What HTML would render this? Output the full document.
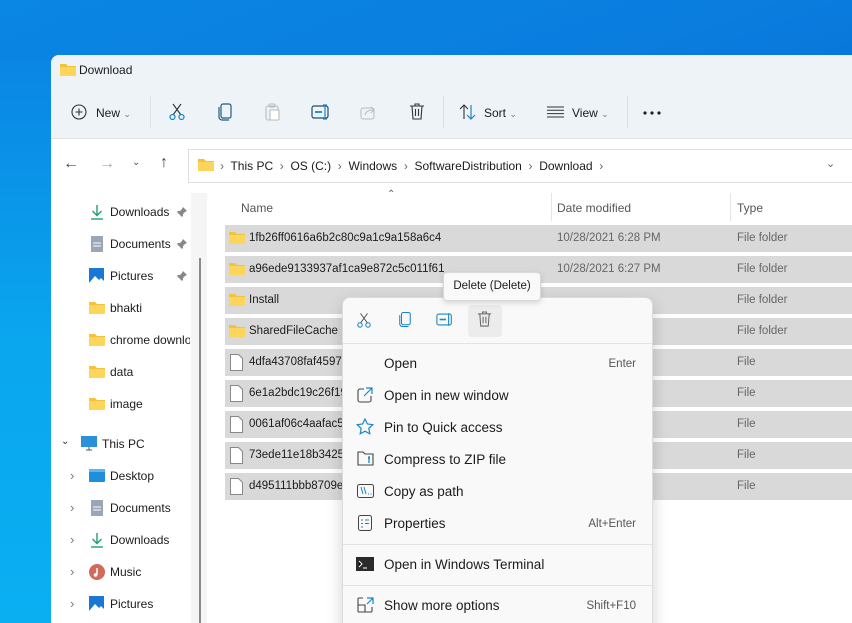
<!DOCTYPE html>
<html style="width:852px;height:623px;overflow:hidden"><head><meta charset="utf-8"><style>
*{margin:0;padding:0;box-sizing:border-box}
body{width:852px;height:623px;overflow:hidden;position:relative;font-family:"Liberation Sans",sans-serif;background:linear-gradient(160deg,#0a86e4 0%,#0a7ddf 30%,#0666d0 70%,#0560c8 100%);}
.bgl{position:absolute;left:0;top:60px;width:51px;height:563px;background:linear-gradient(180deg,#0a86e4,#0aa6ee 50%,#0aaff2)}
.a{position:absolute;white-space:nowrap}
.win{position:absolute;left:51px;top:55px;width:801px;height:568px;background:#fff;border-radius:8px 0 0 0;overflow:hidden}
.hdr{position:absolute;left:0;top:0;width:100%;height:84px;background:#eef3f8;border-bottom:1px solid #e0e3e6}
.t12{font-size:12px;color:#1b1b1b}
.row{position:absolute;left:225px;width:627px;height:27px;background:#d9d9d9;font-size:11.5px;color:#1b1b1b}
.row span{position:absolute;top:7px}
.menu{position:absolute;left:342px;top:297px;width:311px;height:340px;background:#f9f9f9;border:1px solid #dcdcdc;border-radius:8px;box-shadow:0 6px 16px rgba(0,0,0,.18)}
.mi{position:absolute;left:41px;font-size:13.5px;color:#1b1b1b}
.sc{position:absolute;right:16px;font-size:11.5px;color:#555}
.sep{position:absolute;left:0;width:100%;height:1px;background:#e3e3e3}
svg{position:absolute}
</style></head><body>
<div class="bgl"></div>
<div class="win">
 <div class="hdr"></div>
</div>
<svg style="left:60px;top:63px" width="16" height="13" viewBox="0 0 16 13"><path d="M0 1h6l2 2h8v10H0z" fill="#f0c33c"/><path d="M0 4h16v9H0z" fill="#fcd55a"/></svg>
<div class="a t12" style="left:79px;top:63px">Download</div>
<svg style="left:71px;top:104px" width="16" height="16" viewBox="0 0 16 16"><circle cx="8" cy="8" r="7" fill="none" stroke="#333" stroke-width="1.1"/><path d="M8 4.5v7M4.5 8h7" stroke="#333" stroke-width="1.1"/></svg>
<div class="a t12" style="left:96px;top:106px">New <span style="font-size:9px;color:#777">&#8964;</span></div>
<div class="a" style="left:150px;top:96px;width:1px;height:32px;background:#dde1e5"></div>
<svg style="left:168px;top:103px" width="18" height="18" viewBox="0 0 18 18"><path d="M5 1l8 11M13 1L5 12" stroke="#333" stroke-width="1.1"/><circle cx="4.5" cy="14" r="2.5" fill="none" stroke="#1a86c8" stroke-width="1.2"/><circle cx="13.5" cy="14" r="2.5" fill="none" stroke="#1a86c8" stroke-width="1.2"/></svg>
<svg style="left:217px;top:103px" width="16" height="18" viewBox="0 0 16 18"><rect x="4" y="1" width="10" height="14" rx="2" fill="none" stroke="#1e5c84" stroke-width="1.2"/><path d="M2 4v10a3 3 0 0 0 3 3h7" fill="none" stroke="#1e5c84" stroke-width="1.2"/></svg>
<svg style="left:265px;top:103px" width="16" height="18" viewBox="0 0 16 18"><rect x="1" y="3" width="12" height="14" rx="2" fill="none" stroke="#bbb" stroke-width="1.1"/><rect x="5" y="7" width="9" height="10" rx="1" fill="#fff" stroke="#bbb" stroke-width="1.1"/><rect x="4" y="1" width="6" height="3" rx="1" fill="none" stroke="#bbb"/></svg>
<svg style="left:311px;top:104px" width="20" height="16" viewBox="0 0 20 16"><rect x="1" y="2" width="16" height="12" rx="2" fill="none" stroke="#1e4e70" stroke-width="1.2"/><path d="M4 8h7" stroke="#1a86c8" stroke-width="1.8"/><path d="M14 1v14M12 1h4M12 15h4" stroke="#1a86c8" stroke-width="1.2"/></svg>
<svg style="left:360px;top:104px" width="17" height="16" viewBox="0 0 17 16"><rect x="1" y="4" width="13" height="11" rx="2" fill="none" stroke="#bbb"/><path d="M5 11c1-4 4-5 8-5M11 3l3 3-3 3" fill="none" stroke="#bbb"/></svg>
<svg style="left:409px;top:103px" width="16" height="18" viewBox="0 0 16 18"><path d="M1 3h14M6 3V1h4v2M3 3l1 13h8l1-13M6.5 6v7M9.5 6v7" fill="none" stroke="#333" stroke-width="1.1"/></svg>
<div class="a" style="left:443px;top:96px;width:1px;height:32px;background:#dde1e5"></div>
<svg style="left:459px;top:104px" width="18" height="16" viewBox="0 0 18 16"><path d="M5 15V1M1 5l4-4 4 4" fill="none" stroke="#333" stroke-width="1.1"/><path d="M12 1v14M8 11l4 4 4-4" fill="none" stroke="#1a86c8" stroke-width="1.2"/></svg>
<div class="a t12" style="left:484px;top:106px">Sort <span style="font-size:9px;color:#777">&#8964;</span></div>
<svg style="left:547px;top:106px" width="17" height="12" viewBox="0 0 17 12"><path d="M0 1h17M0 4.3h17M0 7.6h17M0 11h17" stroke="#333" stroke-width="1"/></svg>
<div class="a t12" style="left:572px;top:106px">View <span style="font-size:9px;color:#777">&#8964;</span></div>
<div class="a" style="left:627px;top:96px;width:1px;height:32px;background:#dde1e5"></div>
<svg style="left:643px;top:111px" width="18" height="4"><circle cx="2" cy="2" r="1.6" fill="#222"/><circle cx="9" cy="2" r="1.6" fill="#222"/><circle cx="16" cy="2" r="1.6" fill="#222"/></svg>
<div class="a" style="left:63px;top:155px;font-size:16px;color:#444">&#8592;</div>
<div class="a" style="left:99px;top:155px;font-size:16px;color:#aaa">&#8594;</div>
<div class="a" style="left:132px;top:157px;font-size:10px;color:#555">&#8964;</div>
<div class="a" style="left:160px;top:154px;font-size:16px;color:#444">&#8593;</div>
<div class="a" style="left:188px;top:149px;width:680px;height:34px;border:1px solid #dedede;background:#fff"></div>
<svg style="left:198px;top:158px" width="16" height="13" viewBox="0 0 16 13"><path d="M0 1h6l2 2h8v10H0z" fill="#f0c33c"/><path d="M0 4h16v9H0z" fill="#fcd55a"/></svg>
<div class="a t12" style="left:220px;top:159px"><span style="color:#666">›</span>&nbsp; This PC &nbsp;<span style="color:#666">›</span>&nbsp; OS (C:) &nbsp;<span style="color:#666">›</span>&nbsp; Windows &nbsp;<span style="color:#666">›</span>&nbsp; SoftwareDistribution &nbsp;<span style="color:#666">›</span>&nbsp; Download &nbsp;<span style="color:#666">›</span></div>
<div class="a" style="left:826px;top:157px;font-size:11px;color:#666">&#8964;</div>
<div class="a" style="left:191px;top:193px;width:16px;height:430px;background:#f5f5f5"></div>
<div class="a" style="left:199px;top:258px;width:2px;height:365px;background:#8a8a8a"></div>
<div class="a t12" style="left:110px;top:205px">Downloads</div>
<div class="a t12" style="left:110px;top:237px">Documents</div>
<div class="a t12" style="left:110px;top:269px">Pictures</div>
<div class="a t12" style="left:110px;top:301px">bhakti</div>
<div class="a t12" style="left:110px;top:333px;width:80px;overflow:hidden">chrome downloads</div>
<div class="a t12" style="left:110px;top:365px">data</div>
<div class="a t12" style="left:110px;top:397px">image</div>
<svg style="left:176px;top:206px" width="12" height="12" viewBox="0 0 12 12"><path d="M7 1l4 4-2 1-2 2 0 2-1 1-5-5 1-1 2 0 2-2z M3 8l-2 3" fill="#888"/></svg>
<svg style="left:176px;top:238px" width="12" height="12" viewBox="0 0 12 12"><path d="M7 1l4 4-2 1-2 2 0 2-1 1-5-5 1-1 2 0 2-2z M3 8l-2 3" fill="#888"/></svg>
<svg style="left:176px;top:270px" width="12" height="12" viewBox="0 0 12 12"><path d="M7 1l4 4-2 1-2 2 0 2-1 1-5-5 1-1 2 0 2-2z M3 8l-2 3" fill="#888"/></svg>
<svg style="left:89px;top:204px" width="16" height="16" viewBox="0 0 16 16"><path d="M8 1v10M3.5 7l4.5 4.5L12.5 7" fill="none" stroke="#20a070" stroke-width="1.4"/><path d="M2 15h12" stroke="#20a070" stroke-width="1.4"/></svg>
<svg style="left:91px;top:236px" width="12" height="16"><rect width="12" height="16" fill="#9aa6b6"/><path d="M2 7h8M2 10h8" stroke="#fff"/></svg>
<svg style="left:89px;top:268px" width="15" height="15"><rect width="15" height="15" fill="#1a78d4"/><path d="M0 15l6-7 4 4 2-2 3 3v2z" fill="#fff"/></svg>
<svg style="left:89px;top:302px" width="16" height="12" viewBox="0 0 16 12"><path d="M0 0h6l2 2h8v10H0z" fill="#f0c33c"/><path d="M0 3h16v9H0z" fill="#fcd55a"/></svg>
<svg style="left:89px;top:334px" width="16" height="12" viewBox="0 0 16 12"><path d="M0 0h6l2 2h8v10H0z" fill="#f0c33c"/><path d="M0 3h16v9H0z" fill="#fcd55a"/></svg>
<svg style="left:89px;top:366px" width="16" height="12" viewBox="0 0 16 12"><path d="M0 0h6l2 2h8v10H0z" fill="#f0c33c"/><path d="M0 3h16v9H0z" fill="#fcd55a"/></svg>
<svg style="left:89px;top:398px" width="16" height="12" viewBox="0 0 16 12"><path d="M0 0h6l2 2h8v10H0z" fill="#f0c33c"/><path d="M0 3h16v9H0z" fill="#fcd55a"/></svg>
<div class="a" style="left:61px;top:436px;font-size:10px;color:#333">&#8964;</div>
<svg style="left:81px;top:436px" width="16" height="15"><rect width="16" height="11" fill="#2a90d8"/><path d="M5 14h6M8 11v3" stroke="#555"/></svg>
<div class="a t12" style="left:102px;top:437px">This PC</div>
<div class="a" style="left:70px;top:468px;font-size:13px;color:#777">›</div>
<div class="a" style="left:70px;top:500px;font-size:13px;color:#777">›</div>
<div class="a" style="left:70px;top:532px;font-size:13px;color:#777">›</div>
<div class="a" style="left:70px;top:564px;font-size:13px;color:#777">›</div>
<div class="a" style="left:70px;top:596px;font-size:13px;color:#777">›</div>
<svg style="left:89px;top:469px" width="16" height="13"><rect width="16" height="13" rx="1" fill="#1e8fd8"/><rect width="16" height="3" fill="#5bb8ee"/></svg>
<svg style="left:91px;top:500px" width="12" height="16"><rect width="12" height="16" fill="#9aa6b6"/><path d="M2 7h8M2 10h8" stroke="#fff"/></svg>
<svg style="left:89px;top:532px" width="16" height="16" viewBox="0 0 16 16"><path d="M8 1v10M3.5 7l4.5 4.5L12.5 7" fill="none" stroke="#20a070" stroke-width="1.4"/><path d="M2 15h12" stroke="#20a070" stroke-width="1.4"/></svg>
<svg style="left:89px;top:564px" width="16" height="16"><circle cx="8" cy="8" r="8" fill="#d06a5a"/><path d="M8 4v7" stroke="#fff" stroke-width="1.5"/><circle cx="6.5" cy="11" r="1.8" fill="#fff"/></svg>
<svg style="left:89px;top:596px" width="15" height="15"><rect width="15" height="15" fill="#1a78d4"/><path d="M0 15l6-7 4 4 2-2 3 3v2z" fill="#fff"/></svg>
<div class="a t12" style="left:110px;top:469px">Desktop</div>
<div class="a t12" style="left:110px;top:501px">Documents</div>
<div class="a t12" style="left:110px;top:533px">Downloads</div>
<div class="a t12" style="left:110px;top:565px">Music</div>
<div class="a t12" style="left:110px;top:597px">Pictures</div>
<div class="a" style="left:387px;top:189px;font-size:10px;color:#666">&#8963;</div>
<div class="a" style="left:241px;top:201px;font-size:12px;color:#555">Name</div>
<div class="a" style="left:551px;top:193px;width:1px;height:28px;background:#e5e5e5"></div>
<div class="a" style="left:557px;top:201px;font-size:12px;color:#555">Date modified</div>
<div class="a" style="left:730px;top:193px;width:1px;height:28px;background:#e5e5e5"></div>
<div class="a" style="left:737px;top:201px;font-size:12px;color:#555">Type</div>
<div class="row" style="top:225px"><span style="left:24px">1fb26ff0616a6b2c80c9a1c9a158a6c4</span><span style="left:332px;color:#666">10/28/2021 6:28 PM</span><span style="left:512px;color:#666">File folder</span></div>
<div class="row" style="top:256px"><span style="left:24px">a96ede9133937af1ca9e872c5c011f61</span><span style="left:332px;color:#666">10/28/2021 6:27 PM</span><span style="left:512px;color:#666">File folder</span></div>
<div class="row" style="top:287px"><span style="left:24px">Install</span><span style="left:512px;color:#666">File folder</span></div>
<div class="row" style="top:318px"><span style="left:24px">SharedFileCache</span><span style="left:512px;color:#666">File folder</span></div>
<div class="row" style="top:349px"><span style="left:24px">4dfa43708faf4597</span><span style="left:512px;color:#666">File</span></div>
<div class="row" style="top:380px"><span style="left:24px">6e1a2bdc19c26f19</span><span style="left:512px;color:#666">File</span></div>
<div class="row" style="top:411px"><span style="left:24px">0061af06c4aafac5</span><span style="left:512px;color:#666">File</span></div>
<div class="row" style="top:442px"><span style="left:24px">73ede11e18b3425</span><span style="left:512px;color:#666">File</span></div>
<div class="row" style="top:473px"><span style="left:24px">d495111bbb8709e</span><span style="left:512px;color:#666">File</span></div>
<svg style="left:229px;top:232px" width="16" height="12" viewBox="0 0 16 12"><path d="M0 0h6l2 2h8v10H0z" fill="#f0c33c"/><path d="M0 3h16v9H0z" fill="#fcd55a"/></svg>
<svg style="left:229px;top:263px" width="16" height="12" viewBox="0 0 16 12"><path d="M0 0h6l2 2h8v10H0z" fill="#f0c33c"/><path d="M0 3h16v9H0z" fill="#fcd55a"/></svg>
<svg style="left:229px;top:294px" width="16" height="12" viewBox="0 0 16 12"><path d="M0 0h6l2 2h8v10H0z" fill="#f0c33c"/><path d="M0 3h16v9H0z" fill="#fcd55a"/></svg>
<svg style="left:229px;top:325px" width="16" height="12" viewBox="0 0 16 12"><path d="M0 0h6l2 2h8v10H0z" fill="#f0c33c"/><path d="M0 3h16v9H0z" fill="#fcd55a"/></svg>
<svg style="left:230px;top:354px" width="13" height="17" viewBox="0 0 13 17"><path d="M.5.5h8l4 4v12H.5z" fill="#fff" stroke="#888"/></svg>
<svg style="left:230px;top:385px" width="13" height="17" viewBox="0 0 13 17"><path d="M.5.5h8l4 4v12H.5z" fill="#fff" stroke="#888"/></svg>
<svg style="left:230px;top:416px" width="13" height="17" viewBox="0 0 13 17"><path d="M.5.5h8l4 4v12H.5z" fill="#fff" stroke="#888"/></svg>
<svg style="left:230px;top:447px" width="13" height="17" viewBox="0 0 13 17"><path d="M.5.5h8l4 4v12H.5z" fill="#fff" stroke="#888"/></svg>
<svg style="left:230px;top:478px" width="13" height="17" viewBox="0 0 13 17"><path d="M.5.5h8l4 4v12H.5z" fill="#fff" stroke="#888"/></svg>
<div class="menu">
 <div class="a" style="left:125px;top:7px;width:34px;height:32px;background:#ececec;border-radius:4px"></div>
 <div class="sep" style="top:45px"></div>
 <div class="mi" style="top:58px">Open</div><div class="sc" style="top:60px">Enter</div>
 <div class="mi" style="top:90px">Open in new window</div>
 <div class="mi" style="top:122px">Pin to Quick access</div>
 <div class="mi" style="top:154px">Compress to ZIP file</div>
 <div class="mi" style="top:186px">Copy as path</div>
 <div class="mi" style="top:218px">Properties</div><div class="sc" style="top:220px">Alt+Enter</div>
 <div class="sep" style="top:246px"></div>
 <div class="mi" style="top:259px">Open in Windows Terminal</div>
 <div class="sep" style="top:287px"></div>
 <div class="mi" style="top:300px">Show more options</div><div class="sc" style="top:302px">Shift+F10</div>
</div>
<svg style="left:356px;top:312px" width="16" height="17" viewBox="0 0 18 18"><path d="M5 1l8 11M13 1L5 12" stroke="#555" stroke-width="1.1"/><circle cx="4.5" cy="14" r="2.5" fill="none" stroke="#1a86c8" stroke-width="1.2"/><circle cx="13.5" cy="14" r="2.5" fill="none" stroke="#1a86c8" stroke-width="1.2"/></svg>
<svg style="left:398px;top:311px" width="14" height="17" viewBox="0 0 16 18"><rect x="4" y="1" width="10" height="14" rx="2" fill="none" stroke="#1a86c8" stroke-width="1.2"/><path d="M2 4v10a3 3 0 0 0 3 3h7" fill="none" stroke="#1a86c8" stroke-width="1.2"/></svg>
<svg style="left:436px;top:312px" width="18" height="15" viewBox="0 0 20 16"><rect x="1" y="2" width="16" height="12" rx="2" fill="none" stroke="#1a86c8" stroke-width="1.2"/><path d="M4 8h7" stroke="#1a86c8" stroke-width="1.8"/><path d="M14 1v14" stroke="#1a86c8" stroke-width="1.2"/></svg>
<svg style="left:477px;top:311px" width="15" height="17" viewBox="0 0 16 18"><path d="M1 3h14M6 3V1h4v2M3 3l1 13h8l1-13M6.5 6v7M9.5 6v7" fill="none" stroke="#666" stroke-width="1.1"/></svg>
<svg style="left:357px;top:387px" width="16" height="16" viewBox="0 0 16 16"><path d="M7 2H3a2 2 0 0 0-2 2v9a2 2 0 0 0 2 2h9a2 2 0 0 0 2-2V9" fill="none" stroke="#444" stroke-width="1.1"/><path d="M9 1h6v6M15 1L7 9" fill="none" stroke="#1a86c8" stroke-width="1.2"/></svg>
<svg style="left:356px;top:418px" width="18" height="17" viewBox="0 0 18 17"><path d="M9 1l2.4 5 5.4.7-4 3.7 1 5.4L9 13.2 4.2 15.8l1-5.4-4-3.7 5.4-.7z" fill="none" stroke="#1a86c8" stroke-width="1.2"/></svg>
<svg style="left:357px;top:451px" width="17" height="15" viewBox="0 0 17 15"><path d="M1 1h5l2 2h8v11H1z" fill="none" stroke="#444" stroke-width="1.1"/><path d="M12 5v7M11 7h2" stroke="#1a86c8" stroke-width="1.3"/></svg>
<svg style="left:357px;top:484px" width="17" height="14" viewBox="0 0 17 14"><rect x=".5" y=".5" width="16" height="13" rx="2" fill="none" stroke="#444"/><path d="M4 3l2 7M7 3l2 7M11 10h1M13.5 10h1" stroke="#1a86c8"/></svg>
<svg style="left:358px;top:515px" width="14" height="16" viewBox="0 0 14 16"><rect x=".5" y=".5" width="13" height="15" rx="2" fill="none" stroke="#444"/><path d="M3 5h2M7 5h4M3 8.5h2M7 8.5h4M3 12h2" stroke="#1a86c8"/></svg>
<svg style="left:356px;top:557px" width="18" height="14"><rect width="18" height="14" fill="#2b2b2b"/><path d="M3 4l3 3-3 3M7 11h4" stroke="#fff" stroke-width="1"/></svg>
<svg style="left:357px;top:597px" width="17" height="16" viewBox="0 0 17 16"><path d="M6 1H2a1 1 0 0 0-1 1v12a1 1 0 0 0 1 1h12a1 1 0 0 0 1-1v-4M1 8h7v7" fill="none" stroke="#444" stroke-width="1.1"/><path d="M10 1h6v6M16 1l-6 6" fill="none" stroke="#1a86c8" stroke-width="1.2"/></svg>
<div class="a" style="left:443px;top:272px;width:98px;height:29px;background:#f9f9f9;border:1px solid #d8d8d8;border-radius:4px;box-shadow:0 2px 6px rgba(0,0,0,.15);font-size:11.5px;color:#1b1b1b;text-align:center;line-height:27px">Delete (Delete)</div>
</body></html>
